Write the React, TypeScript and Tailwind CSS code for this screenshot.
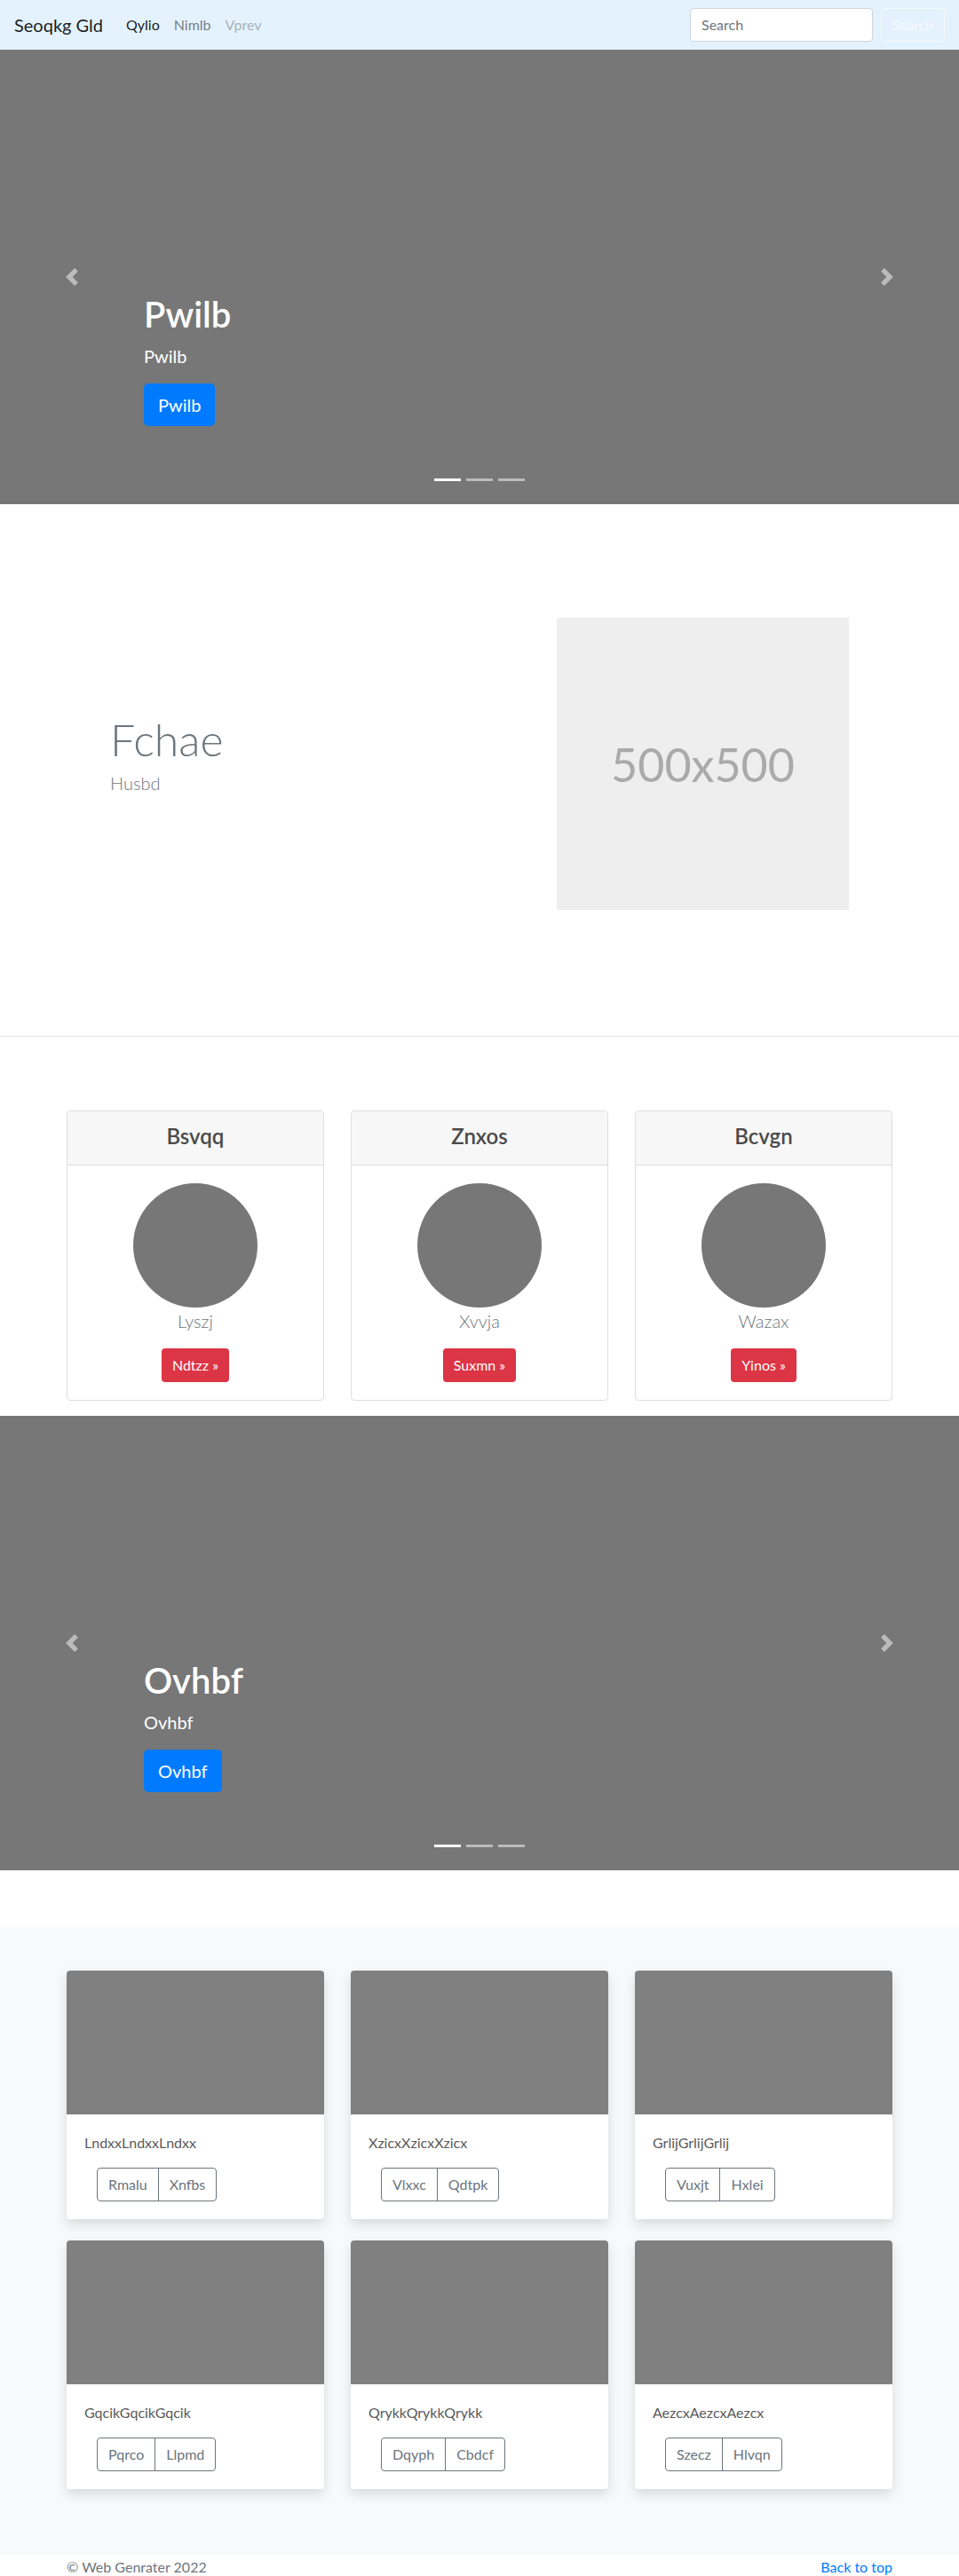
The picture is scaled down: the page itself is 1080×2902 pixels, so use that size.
import React from 'react';

const font = "font-['Lato','Open_Sans',sans-serif]";

const Chevron = ({ dir }: { dir: 'prev' | 'next' }) => (
  <svg viewBox="0 0 8 8" className="h-5 w-5 opacity-50" fill="#fff">
    {dir === 'prev' ? (
      <path d="M5.25 0l-4 4 4 4 1.5-1.5L4.25 4l2.5-2.5L5.25 0z" />
    ) : (
      <path d="M2.75 0l-1.5 1.5L3.75 4l-2.5 2.5L2.75 8l4-4-4-4z" />
    )}
  </svg>
);

const Slide = ({ title }: { title: string }) => (
  <div className="relative flex h-[512px] flex-col justify-end bg-[#777] pb-[72px] pl-[162px]">
    <h1 className="mb-2 text-[40px] font-semibold leading-[48px] text-white">{title}</h1>
    <p className="mb-4 text-[20px] leading-[30px] text-white">{title}</p>
    <div className="mb-4">
      <a className="inline-flex h-[48px] items-center rounded-[5px] bg-[#007bff] px-4 text-[20px] text-white">
        {title}
      </a>
    </div>
    <div className="absolute inset-y-0 left-0 flex w-[15%] items-center justify-center">
      <Chevron dir="prev" />
    </div>
    <div className="absolute inset-y-0 right-0 flex w-[15%] items-center justify-center">
      <Chevron dir="next" />
    </div>
    <div className="absolute bottom-[26px] left-1/2 flex -translate-x-1/2 gap-[6px]">
      <span className="h-[3px] w-[30px] bg-white" />
      <span className="h-[3px] w-[30px] bg-white/50" />
      <span className="h-[3px] w-[30px] bg-white/50" />
    </div>
  </div>
);

const pricing = [
  { title: 'Bsvqq', name: 'Lyszj', btn: 'Ndtzz' },
  { title: 'Znxos', name: 'Xvvja', btn: 'Suxmn' },
  { title: 'Bcvgn', name: 'Wazax', btn: 'Yinos' },
];

const album = [
  { text: 'LndxxLndxxLndxx', a: 'Rmalu', b: 'Xnfbs' },
  { text: 'XzicxXzicxXzicx', a: 'Vlxxc', b: 'Qdtpk' },
  { text: 'GrlijGrlijGrlij', a: 'Vuxjt', b: 'Hxlei' },
  { text: 'GqcikGqcikGqcik', a: 'Pqrco', b: 'Llpmd' },
  { text: 'QrykkQrykkQrykk', a: 'Dqyph', b: 'Cbdcf' },
  { text: 'AezcxAezcxAezcx', a: 'Szecz', b: 'Hlvqn' },
];

export default function App() {
  return (
    <div className={`${font} bg-white text-[#212529]`}>
      {/* navbar */}
      <nav className="flex h-14 items-center bg-[#e3f2fd] px-4">
        <span className="mr-[18px] text-[20px] text-black/90">Seoqkg Gld</span>
        <a className="px-2 text-base text-black/90">Qylio</a>
        <a className="px-2 text-base text-black/50">Nimlb</a>
        <a className="px-2 text-base text-black/30">Vprev</a>
        <div className="ml-auto flex items-center gap-[9px]">
          <div className="flex h-[38px] w-[206px] items-center rounded-[4px] border border-[#ced4da] bg-white px-3 text-base text-[#6c757d]">
            Search
          </div>
          <button className="h-[38px] w-[72px] rounded-[4px] border border-[#f8f9fa] text-base text-[#f8f9fa]">
            Search
          </button>
        </div>
      </nav>

      <Slide title="Pwilb" />

      {/* featurette */}
      <section className="border-b border-[#e5e5e5] pb-[142px] pt-[128px]">
        <div className="flex items-start justify-between px-[124px]">
          <div className="mt-[107px]">
            <h2 className="mb-1 text-[50px] font-light leading-[1.2] text-[#6c757d]">Fchae</h2>
            <p className="text-[20px] font-light leading-[30px] text-[#6c757d]">Husbd</p>
          </div>
          <div className="flex h-[329px] w-[329px] items-center justify-center bg-[#eee] text-[52px] text-[#aaa]">
            500x500
          </div>
        </div>
      </section>

      {/* pricing cards */}
      <section className="pb-[17px] pt-[83px]">
        <div className="mx-[75px] grid grid-cols-3 gap-[30px]">
          {pricing.map((p) => (
            <div key={p.title} className="overflow-hidden rounded-[4px] border border-[#dfdfdf] text-center">
              <div className="flex h-[61px] items-center justify-center border-b border-[#dfdfdf] bg-[#f7f7f7] pb-1">
                <h4 className="text-[24px] font-semibold text-[#4a4a4a]">{p.title}</h4>
              </div>
              <div className="flex flex-col items-center px-5 pb-5 pt-5">
                <div className="h-[140px] w-[140px] rounded-full bg-[#777]" />
                <p className="text-[20px] font-light leading-[30px] text-[#6c757d]">{p.name}</p>
                <a className="mt-4 inline-flex h-[38px] items-center rounded-[4px] bg-[#dc3545] px-3 text-base text-white">
                  {p.btn} &raquo;
                </a>
              </div>
            </div>
          ))}
        </div>
      </section>

      <Slide title="Ovhbf" />

      {/* album */}
      <section className="mt-16 bg-[#f8f9fa] pb-[74px] pt-[49px]">
        <div className="mx-[75px] grid grid-cols-3 gap-x-[30px] gap-y-6">
          {album.map((c) => (
            <div
              key={c.text}
              className="overflow-hidden rounded-[4px] bg-white shadow-[0_6px_14px_rgba(0,0,0,0.13)]"
            >
              <div className="h-[162px] bg-[#808080]" />
              <div className="p-5">
                <p className="mb-4 text-base leading-6 text-[#5a5a5a]">{c.text}</p>
                <div className="ml-[14px] flex">
                  <button className="h-[38px] rounded-l-[4px] border border-[#6c757d] px-3 text-base text-[#6c757d]">
                    {c.a}
                  </button>
                  <button className="-ml-px h-[38px] rounded-r-[4px] border border-[#6c757d] px-3 text-base text-[#6c757d]">
                    {c.b}
                  </button>
                </div>
              </div>
            </div>
          ))}
        </div>
      </section>

      <footer className="flex justify-between px-[75px] pt-[2px] text-base leading-6">
        <p className="text-[#6c757d]">&copy; Web Genrater 2022</p>
        <a className="text-[#007bff]">Back to top</a>
      </footer>
    </div>
  );
}
